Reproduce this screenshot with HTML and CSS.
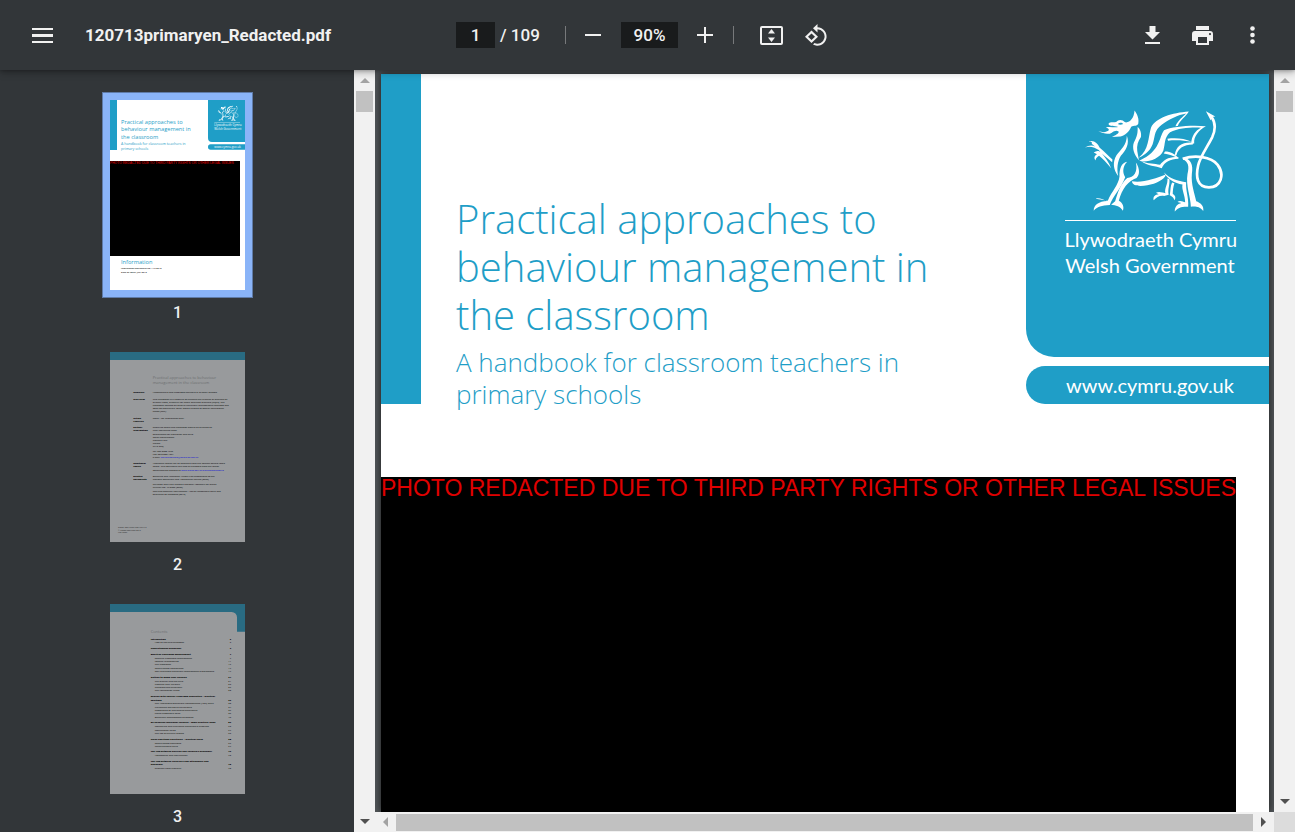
FILE: index.html
```html
<!DOCTYPE html>
<html lang="en">
<head>
<meta charset="utf-8">
<title>120713primaryen_Redacted.pdf</title>
<link rel="stylesheet" href="styles.css">
</head>
<body>
<svg class="defs" aria-hidden="true">
  <symbol id="dragon" viewBox="50 40 415 312">
    <path d="M198 47C206 58 212 72 209 86C206 94 196 90 188 95C182 110 170 121 156 124L130 126C140 121 150 116 151 110C144 105 138 108 130 113C121 119 106 117 90 109C102 112 114 113 121 106C122 100 116 100 112 97C124 94 136 98 149 96C138 91 124 96 120 87C122 79 134 83 143 81C150 72 162 73 170 82C184 84 196 70 198 47Z"/>
    <path class="dragon-gap" d="M148 87C153 82 161 83 164 87C158 90 152 90 148 87Z"/>
    <path d="M175 122C184 146 172 166 157 182C146 200 145 222 149 242C134 222 132 200 144 180C158 162 174 150 175 122Z"/>
    <path d="M207 96C215 101 219 115 217 126C208 138 204 152 206 168L211 195C196 178 190 158 196 142C206 124 208 112 207 96Z"/>
    <path d="M360 50C310 54 262 68 247 98C238 128 242 162 210 188C234 178 250 160 254 140C260 118 258 106 278 90C300 74 328 60 352 56C342 66 328 76 320 94L327 93C334 76 350 66 360 50Z"/>
    <path d="M411 94C370 90 310 94 286 106C270 128 276 168 212 197C232 204 274 192 284 166C290 146 286 128 304 112C330 98 368 97 396 98C380 106 368 122 367 146L376 145C374 124 390 106 411 94Z"/>
    <path d="M296 131C322 128 346 130 369 140C346 136 320 134 298 137ZM372 143C342 140 322 152 318 180L323 180C328 160 344 148 372 148ZM289 169C306 169 318 177 329 188C315 184 300 176 285 175Z"/>
    <path d="M329 186C304 182 284 194 274 209C258 204 238 206 218 198C236 212 262 212 279 219C288 200 304 192 329 191Z"/>
    <path class="dragon-tail" d="M342 191C378 179 426 184 446 209C468 238 456 276 420 276C384 276 380 244 388 210C394 184 416 154 430 126C440 104 439 82 428 66"/>
    <path d="M411 49L439 65L430 66L425 76Z"/>
    <path d="M342 188C366 190 374 210 369 236C366 266 378 296 382 318C394 322 406 332 403 347C392 332 378 333 366 334C366 306 350 270 356 236C362 212 358 200 342 192Z"/>
    <path d="M286 232C302 250 328 258 352 261C350 286 360 306 358 334C342 334 330 334 318 348C318 334 326 326 338 323L326 320C332 314 342 318 349 321C349 300 338 284 341 268C318 264 296 252 286 232Z"/>
    <path d="M190 258C220 264 262 250 291 238C290 252 262 266 236 270C216 273 192 274 190 258Z"/>
    <path d="M296 250L302 252C304 268 296 282 300 298L286 302C272 300 264 306 255 315C252 304 260 298 270 297L262 292C272 288 282 292 290 294C286 280 298 268 296 250ZM310 262L317 264C313 276 312 288 312 296C320 300 322 308 317 315C314 304 306 302 303 300C306 286 304 274 310 262Z"/>
    <path d="M176 200C160 202 152 220 153 244C150 270 130 288 118 316L82 310C92 306 106 314 116 317C92 318 76 328 76 346C86 334 100 330 124 329C132 304 158 280 170 246C160 230 164 212 176 200Z"/>
    <path d="M202 202C214 220 214 238 204 248C180 256 160 280 151 316C162 322 168 334 163 346C156 332 142 330 128 328L140 318C148 290 156 266 176 248C196 246 208 232 202 202Z"/>
    <path d="M50 158C60 150 72 150 80 154L70 146C74 138 62 140 62 139C76 134 88 144 94 158C108 170 122 184 132 193L131 201C114 186 100 178 91 165C82 158 62 150 50 158ZM76 172C84 166 92 166 98 172C110 186 122 202 128 219C114 202 102 190 92 182C86 186 80 192 83 196C75 190 78 180 86 177Z"/>
  </symbol>
</svg>

<header class="toolbar">
  <div class="toolbar-start">
    <button class="icon-button menu-button" type="button" aria-label="Menu">
      <svg width="21" height="15" viewBox="0 0 21 15"><path d="M0 0h21v2H0zM0 6h21v3H0zM0 13h21v2H0z"/></svg>
    </button>
    <h1 class="file-name">120713primaryen_Redacted.pdf</h1>
  </div>
  <div class="toolbar-center">
    <input class="field page-field" type="text" value="1" aria-label="Page number">
    <span class="page-total">/ 109</span>
    <span class="divider"></span>
    <button class="icon-button zoom-button" type="button" aria-label="Zoom out">
      <svg width="16" height="16" viewBox="0 0 16 16"><path d="M0 7h16v2H0z"/></svg>
    </button>
    <input class="field zoom-field" type="text" value="90%" aria-label="Zoom level">
    <button class="icon-button zoom-button" type="button" aria-label="Zoom in">
      <svg width="16" height="16" viewBox="0 0 16 16"><path d="M0 7h7V0h2v7h7v2H9v7H7V9H0z"/></svg>
    </button>
    <span class="divider"></span>
    <button class="icon-button view-button first-view" type="button" aria-label="Fit to page">
      <svg width="23" height="19" viewBox="0 0 23 19"><path fill-rule="evenodd" d="M2 0h19a2 2 0 0 1 2 2v15a2 2 0 0 1-2 2H2a2 2 0 0 1-2-2V2a2 2 0 0 1 2-2zm0 2v15h19V2zM11.500 3l3.500 4.500H8zM8 11.500h7L11.500 16z"/></svg>
    </button>
    <button class="icon-button view-button" type="button" aria-label="Rotate counterclockwise">
      <svg width="23" height="23" viewBox="0 0 23 23"><path fill-rule="evenodd" d="M6.500 6.500l6.500 6.200-6.500 6.300L0 12.700zm0 2.900l-3.500 3.300 3.500 3.400 3.500-3.400zM12.500 0v3.300a9.200 9.200 0 1 1-4.500 17.300l1.500-1.500a7.200 7.200 0 1 0 3-13.800v3.200L8 4.200z"/></svg>
    </button>
  </div>
  <div class="toolbar-end">
    <button class="icon-button action-button" type="button" aria-label="Download">
      <svg width="15" height="18" viewBox="0 0 15 18"><path d="M4.500 0h6v6H15l-7.500 7.500L0 6h4.500zM0 16h15v2H0z"/></svg>
    </button>
    <button class="icon-button action-button" type="button" aria-label="Print">
      <svg width="21" height="19" viewBox="0 0 21 19"><path fill-rule="evenodd" d="M4 0h13v4H4zM3 5h15a3 3 0 0 1 3 3v7h-4v4H4v-4H0V8a3 3 0 0 1 3-3zm3 6v6h9v-6zM18 7a1 1 0 1 0 0 2.200A1 1 0 0 0 18 7z"/></svg>
    </button>
    <button class="icon-button action-button" type="button" aria-label="More actions">
      <svg width="5" height="18" viewBox="0 0 5 18"><circle cx="2.500" cy="2.500" r="2.300"/><circle cx="2.500" cy="9" r="2.300"/><circle cx="2.500" cy="15.500" r="2.300"/></svg>
    </button>
  </div>
</header>

<main class="workspace">
  <nav class="sidebar" aria-label="Page thumbnails">
    <a class="thumb selected" href="#page1">
      <svg class="thumb-page" viewBox="45 45 405 570">
        <rect class="paper" x="45" y="45" width="405" height="570"/>
        <path class="teal" d="M45 45h21v150H45zM339 45h111v126H351a12 12 0 0 1-12-12zM347 178h103v16H347a8 8 0 0 1 0-16z"/>
        <use href="#dragon" class="white" x="367" y="61" width="64" height="48"/>
        <path class="white" d="M358 112h77v1h-77z"/>
        <g class="white frutiger-small"><text x="358" y="124">Llywodraeth Cymru</text><text x="358" y="135">Welsh Government</text><text x="358" y="189">www.cymru.gov.uk</text></g>
        <g class="teal cover-title"><text x="78" y="117">Practical approaches to</text><text x="78" y="138">behaviour management in</text><text x="78" y="162">the classroom</text><text x="78" y="537">Information</text></g>
        <g class="teal cover-sub"><text x="78" y="180">A handbook for classroom teachers in</text><text x="78" y="195">primary schools</text></g>
        <path d="M45 228h390v285H45z"/>
        <text class="redacted-small" x="45" y="237">PHOTO REDACTED DUE TO THIRD PARTY RIGHTS OR OTHER LEGAL ISSUES</text>
        <g class="fine"><text x="78" y="551">Information document no: 117/2012</text><text x="78" y="563">Date of issue: July 2012</text></g>
      </svg>
      <span class="thumb-label">1</span>
    </a>
    <a class="thumb" href="#page2">
      <svg class="thumb-page" viewBox="15 18 405 570">
        <rect class="dim-paper" x="15" y="18" width="405" height="570"/>
        <rect class="dim-teal" x="15" y="18" width="405" height="24"/>
        <g class="dim-title"><text x="143" y="99">Practical approaches to behaviour</text><text x="143" y="114">management in the classroom</text></g>
        <g class="fine bold"><text x="85" y="141">Audience</text><text x="85" y="162">Overview</text><text x="85" y="219">Action</text><text x="85" y="228">required</text><text x="85" y="246">Further</text><text x="85" y="255">information</text><text x="85" y="354">Additional</text><text x="85" y="363">copies</text><text x="85" y="393">Related</text><text x="85" y="402">documents</text></g>
        <g class="fine">
          <text x="143" y="141">Headteachers and classroom teachers in primary schools.</text>
          <text x="143" y="162">This handbook is a resource to enhance the practice of teachers of</text><text x="143" y="171">primary-aged, primarily for newly qualified teachers (NQTs). The</text><text x="143" y="180">handbook focuses on general behaviour management methods and</text><text x="143" y="189">does not specifically cover issues relating to special educational</text><text x="143" y="198">needs (SEN).</text>
          <text x="143" y="219">None – for information only.</text>
          <text x="143" y="246">Enquiries about this handbook should be directed to:</text><text x="143" y="255">Pupil Wellbeing Team</text><text x="143" y="267">Department for Education and Skills</text><text x="143" y="276">Welsh Government</text><text x="143" y="285">Cathays Park</text><text x="143" y="294">Cardiff</text><text x="143" y="303">CF10 3NQ</text><text x="143" y="318">Tel: 029 2082 1556</text><text x="143" y="327">Fax: 029 2080 1051</text><text x="143" y="336">e-mail: <tspan class="link">WellbeingTeam@wales.gsi.gov.uk</tspan></text>
          <text x="143" y="354">Additional copies can be obtained from the contact details listed</text><text x="143" y="363">above. This document can also be accessed from the Welsh</text><text x="143" y="375">Government’s website at <tspan class="link">www.wales.gov.uk/educationandskills</tspan></text>
          <text x="143" y="393">Behaving and Attending: Action Plan Responding to the</text><text x="143" y="402">National Behaviour and Attendance Review (2009)</text><text x="143" y="417">Inclusion and Pupil Support National Assembly for Wales</text><text x="143" y="426">Circular No: 47/2006 (2006)</text><text x="143" y="438">Safe and effective intervention – use of reasonable force and</text><text x="143" y="447">searching for weapons (2010)</text>
        </g>
        <g class="imprint"><text x="39" y="546">Digital ISBN 978 0 7504 7617 3</text><text x="39" y="555">© Crown copyright 2012</text><text x="39" y="562">WG15985</text></g>
      </svg>
      <span class="thumb-label">2</span>
    </a>
    <a class="thumb" href="#page3">
      <svg class="thumb-page" viewBox="15 15 405 570">
        <rect class="dim-paper" x="15" y="15" width="405" height="570"/>
        <path class="dim-teal" d="M15 15h405v83h-24V55a16 16 0 0 0-16-16H15z"/>
        <text class="dim-title contents" x="137" y="102">Contents</text>
        <g class="fine bold">
          <text x="137" y="123">Introduction</text><text x="137" y="150">Understanding behaviour</text><text x="137" y="168">Effective classroom management</text><text x="137" y="237">Getting to know your children</text><text x="137" y="294">Dealing with specific classroom difficulties – practical</text><text x="137" y="306">solutions</text><text x="137" y="372">Re-engaging individual children – some practical ideas</text><text x="137" y="423">Using sanctions effectively – practical ideas</text><text x="137" y="459">The link between bullying and children’s behaviour</text><text x="137" y="489">The link between children’s non-attendance and</text><text x="137" y="498">behaviour</text>
        </g>
        <g class="fine bold folio"><text x="378" y="123">3</text><text x="378" y="150">4</text><text x="378" y="168">7</text><text x="378" y="237">21</text><text x="378" y="306">32</text><text x="378" y="372">52</text><text x="378" y="423">65</text><text x="378" y="459">72</text><text x="378" y="498">78</text></g>
        <g class="fine">
          <text x="149" y="132">How to use this handbook</text><text x="149" y="180">Effective classroom management</text><text x="149" y="189">Positive relationships</text><text x="149" y="198">The classroom</text><text x="149" y="210">Whole-school approaches</text><text x="149" y="219">Well-evaluated behaviour management programmes</text><text x="149" y="249">The teacher and the child</text><text x="149" y="258">Knowing your children</text><text x="149" y="267">Inappropriate behaviour</text><text x="149" y="276">The Foundation Phase</text><text x="149" y="315">The Antecedent-Behaviour-Consequence (ABC) chart</text><text x="149" y="327">Preventing disruptive behaviours</text><text x="149" y="336">Responding to challenging behaviours</text><text x="149" y="345">Using reasonable force</text><text x="149" y="357">Behaviour management strategies</text><text x="149" y="384">Monitoring and evaluating behavioural progress</text><text x="149" y="396">Motivational cards</text><text x="149" y="405">The use of nurture groups</text><text x="149" y="435">Whole-school sanctions</text><text x="149" y="444">Teaching social skills</text><text x="149" y="471">Assessment and intervention</text><text x="149" y="510">Evidence from research</text>
        </g>
        <g class="fine folio"><text x="378" y="132">3</text><text x="378" y="180">7</text><text x="378" y="189">11</text><text x="378" y="198">15</text><text x="378" y="210">17</text><text x="378" y="219">17</text><text x="378" y="249">21</text><text x="378" y="258">23</text><text x="378" y="267">25</text><text x="378" y="276">28</text><text x="378" y="315">32</text><text x="378" y="327">34</text><text x="378" y="336">35</text><text x="378" y="345">36</text><text x="378" y="357">40</text><text x="378" y="384">52</text><text x="378" y="396">57</text><text x="378" y="405">60</text><text x="378" y="435">65</text><text x="378" y="444">67</text><text x="378" y="471">72</text><text x="378" y="510">78</text></g>
      </svg>
      <span class="thumb-label">3</span>
    </a>
  </nav>
  <div class="scrollbar vertical" aria-hidden="true">
    <span class="arrow up muted"></span><span class="grip"></span><span class="track"></span><span class="arrow down"></span>
  </div>

  <section class="viewer">
    <div class="document">
      <article class="page" id="page1">
        <div class="cover">
          <div class="cover-band"></div>
          <div class="cover-text">
            <h2 class="cover-heading">Practical approaches to<br>behaviour management in<br>the classroom</h2>
            <p class="cover-subheading">A handbook for classroom teachers in<br>primary schools</p>
          </div>
          <div class="brand">
            <div class="brand-panel">
              <svg class="brand-dragon" role="img" aria-label="Welsh dragon"><use href="#dragon"/></svg>
              <p class="brand-name">Llywodraeth Cymru<br>Welsh Government</p>
            </div>
            <p class="brand-site">www.cymru.gov.uk</p>
          </div>
        </div>
        <div class="redaction">PHOTO REDACTED DUE TO THIRD PARTY RIGHTS OR OTHER LEGAL ISSUES</div>
      </article>
    </div>
    <div class="scrollbar horizontal" aria-hidden="true">
      <span class="arrow left muted"></span><span class="grip"></span><span class="arrow right"></span>
    </div>
  </section>
  <div class="viewer-scroll" aria-hidden="true">
    <div class="scrollbar vertical">
      <span class="arrow up muted"></span><span class="grip"></span><span class="track"></span><span class="arrow down"></span>
    </div>
    <div class="corner"></div>
  </div>
</main>
</body>
</html>
```
FILE: styles.css
```css
* { box-sizing: border-box; }

body {
  display: flex;
  flex-direction: column;
  height: 100vh;
  margin: 0;
  overflow: hidden;
  background: #323639;
  color: #f1f1f1;
  font-family: Roboto, sans-serif;
}

.defs { position: absolute; width: 0; height: 0; }

/* Toolbar */
.toolbar {
  position: relative;
  z-index: 1;
  display: grid;
  grid-template-columns: 1fr auto 1fr;
  align-items: center;
  flex: none;
  height: 70px;
  background: #323639;
  box-shadow: 0 0 4px rgba(0, 0, 0, .3), 0 2px 8px rgba(0, 0, 0, .3);
}
.toolbar-start, .toolbar-center, .toolbar-end { display: flex; align-items: center; }
.toolbar-start { padding-left: 22px; gap: 22px; }
.toolbar-end { justify-content: flex-end; padding-right: 18px; }

.icon-button {
  display: flex;
  align-items: center;
  justify-content: center;
  height: 40px;
  padding: 0;
  border: 0;
  background: none;
}
.icon-button svg { fill: #f1f1f1; }
.menu-button { width: 41px; }
.zoom-button { width: 32px; }
.view-button { width: 45px; }
.first-view { margin-left: 15px; }
.action-button { width: 50px; }

.file-name { margin: 0; font-size: 17px; font-weight: 700; line-height: 20px; }

.field {
  height: 26px;
  padding: 0;
  border: 0;
  background: #191b1c;
  color: #f1f1f1;
  font: 500 17px/26px Roboto, sans-serif;
  text-align: center;
}
.page-field { width: 39px; }
.page-total { width: 46px; padding-left: 5px; font-size: 17px; font-weight: 500; white-space: nowrap; }
.divider { width: 1px; height: 18px; background: #77797b; }
.page-total + .divider { margin: 0 11px 0 24px; }
.zoom-field { width: 57px; margin: 0 11px 0 12px; }
.zoom-button + .divider { margin-left: 12px; }

/* Thumbnails */
.workspace { display: flex; flex: 1; min-height: 0; }
.sidebar {
  display: flex;
  flex: none;
  flex-direction: column;
  align-items: center;
  gap: 29px;
  width: 354px;
  padding: 30px 0 0 1px;
  overflow: hidden;
}
.thumb {
  display: flex;
  flex: none;
  flex-direction: column;
  align-items: center;
  gap: 13px;
  color: #f1f1f1;
  text-decoration: none;
}
.thumb-page { width: 135px; height: 190px; }
.selected .thumb-page { box-shadow: 0 0 0 7px #8ab4f8, 0 0 0 8px #5f7ba8; }
.thumb-label { font-size: 16px; font-weight: 500; line-height: 20px; }

.paper, .white { fill: #fff; }
.teal { fill: #1f9ec7; }
.dim-paper { fill: #989a9c; }
.dim-teal { fill: #296b82; }
.thumb text { font-family: "Open Sans", sans-serif; }
.cover-title { font-size: 17px; }
.cover-sub { font-size: 11px; }
.frutiger-small { font-size: 9px; }
.redacted-small { fill: #e00000; font-size: 10px; }
.thumb .redacted-small { font-family: "Liberation Sans", sans-serif; }
.fine { fill: #222; font-size: 7px; font-weight: 600; }
.imprint { fill: #222; font-size: 6px; }
.bold { fill: #000; font-weight: 800; }
.folio { text-anchor: end; }
.link { fill: #2222cc; }
.dim-title { fill: #6c6e70; font-size: 12px; }

/* Scrollbars */
.scrollbar { display: flex; flex: none; align-items: center; background: #f1f1f1; }
.vertical { flex-direction: column; width: 21px; }
.horizontal { height: 20px; }
.scrollbar .grip { background: #c1c1c1; }
.vertical .grip { width: 17px; height: 21px; }
.horizontal .grip { flex: 1; height: 17px; }
.track { flex: 1; }
.arrow { display: flex; flex: none; align-items: center; justify-content: center; width: 21px; height: 21px; }
.arrow::before { content: ""; border: 5px solid transparent; }
.up::before { border-bottom-color: #505050; border-top: 0; }
.down::before { border-top-color: #505050; border-bottom: 0; }
.left::before { border-right-color: #505050; border-left: 0; }
.right::before { border-left-color: #505050; border-right: 0; }
.up.muted::before { border-bottom-color: #a3a3a3; }
.left.muted::before { border-right-color: #a3a3a3; }
.viewer-scroll { display: flex; flex: none; flex-direction: column; }
.viewer-scroll .vertical { flex: 1; }
.corner { height: 20px; background: #dcdcdc; }

/* Document */
.viewer { display: flex; flex: 1; flex-direction: column; min-width: 0; }
.document { flex: 1; min-height: 0; padding: 4px 5px 0 6px; overflow: hidden; background: #525659; }
.page {
  display: flex;
  flex-direction: column;
  height: 100%;
  background: #fff;
  color: #1f9ec7;
  box-shadow: 0 0 8px rgba(0, 0, 0, .7);
}
.cover { display: flex; flex: none; height: 403px; }
.cover-band { flex: none; width: 40px; height: 330px; background: #1f9ec7; }
.cover-text { flex: 1; padding: 121px 0 0 35px; font-family: "Open Sans", sans-serif; font-weight: 300; white-space: nowrap; }
.cover-heading { margin: 0 0 7px; font-size: 40px; font-weight: 300; line-height: 48px; }
.cover-subheading { margin: 0; font-size: 26px; line-height: 32px; }

.brand { display: flex; flex: none; flex-direction: column; gap: 9px; width: 243px; color: #fff; font-family: Lato, sans-serif; }
.brand-panel {
  display: flex;
  flex-direction: column;
  align-items: center;
  height: 283px;
  padding-top: 34px;
  border-bottom-left-radius: 28px;
  background: #1f9ec7;
}
.brand-dragon { width: 139px; height: 105px; margin-left: 14px; fill: #fff; }
.dragon-gap { fill: #1f9ec7; }
.dragon-tail { fill: none; stroke: #fff; stroke-width: 8px; }
.brand-name { width: 171px; margin: 7px 0 0 5px; padding-top: 5px; border-top: 1px solid #fff; font-size: 20px; line-height: 26px; text-align: center; white-space: nowrap; }
.brand-site { margin: 0; padding-left: 5px; border-radius: 19px 0 0 19px; background: #1f9ec7; font-size: 20px; line-height: 38px; text-align: center; }

.redaction {
  flex: 1;
  margin-right: 33px;
  background: #000;
  color: #e00000;
  font: 23px/22px "Liberation Sans", sans-serif;
  white-space: nowrap;
}
```
